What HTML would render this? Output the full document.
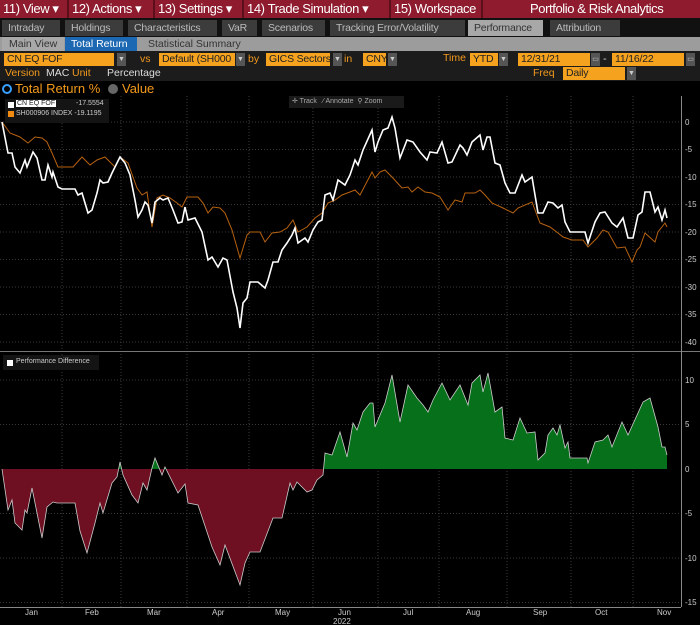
<!DOCTYPE html>
<html><head><meta charset="utf-8"><style>
*{margin:0;padding:0;box-sizing:border-box}
body{width:700px;height:625px;background:#000;font-family:"Liberation Sans",sans-serif;overflow:hidden;position:relative;color:#ddd}
.a{position:absolute;white-space:nowrap}
.hb{background:#8e1b2e;height:18px;top:0;font-size:13px;letter-spacing:-0.4px;color:#fff;line-height:18px;padding-left:3px;overflow:hidden}
.tab{position:absolute;top:20px;height:16px;background:#3c3c3c;color:#bbb;font-size:10.5px;letter-spacing:-0.2px;line-height:16px;padding-left:6px;white-space:nowrap;overflow:hidden}
.of{position:absolute;background:#f5a21f;color:#222;font-size:10.5px;letter-spacing:-0.2px;line-height:13px;height:13px;padding-left:3px;white-space:nowrap;overflow:hidden}
.dd{position:absolute;background:#555;height:13px;width:9px;color:#ccc;font-size:7px;line-height:13px;text-align:center}
.ol{position:absolute;color:#f39a1c;font-size:10.5px;line-height:13px;white-space:nowrap}
</style></head><body>
<div class="a" style="left:0;top:0;width:700px;height:18px;background:#5a0f1a"></div>
<div class="a hb" style="left:0;width:67px">11) View ▾</div>
<div class="a hb" style="left:69px;width:84px">12) Actions ▾</div>
<div class="a hb" style="left:155px;width:87px">13) Settings ▾</div>
<div class="a hb" style="left:244px;width:145px">14) Trade Simulation ▾</div>
<div class="a hb" style="left:391px;width:90px">15) Workspace</div>
<div class="a hb" style="left:483px;width:217px;padding-left:47px">Portfolio &amp; Risk Analytics</div>
<div class="a" style="left:0;top:18px;width:700px;height:19px;background:#111"></div>
<div class="tab" style="left:2px;width:58px">Intraday</div>
<div class="tab" style="left:65px;width:58px">Holdings</div>
<div class="tab" style="left:128px;width:89px">Characteristics</div>
<div class="tab" style="left:222px;width:35px">VaR</div>
<div class="tab" style="left:262px;width:63px">Scenarios</div>
<div class="tab" style="left:330px;width:135px">Tracking Error/Volatility</div>
<div class="tab" style="left:468px;width:75px;background:#a8a8a8;color:#333">Performance</div>
<div class="tab" style="left:550px;width:70px">Attribution</div>
<div class="a" style="left:0;top:37px;width:700px;height:14px;background:#9c9c9c"></div>
<div class="a" style="left:2px;top:37px;width:62px;height:14px;background:#a8a8a8;color:#333;font-size:10.5px;line-height:14px;padding-left:7px">Main View</div>
<div class="a" style="left:65px;top:37px;width:72px;height:14px;background:#1d68b2;color:#fff;font-size:10.5px;line-height:14px;padding-left:6px">Total Return</div>
<div class="a" style="left:148px;top:37px;color:#333;font-size:10.5px;line-height:14px">Statistical Summary</div>
<div class="a" style="left:0;top:51px;width:700px;height:30px;background:#1c1c1c"></div>
<div class="of" style="left:4px;top:53px;width:110px">CN EQ FOF</div><div class="dd" style="left:117px;top:53px">▼</div>
<div class="ol" style="left:140px;top:53px">vs</div>
<div class="of" style="left:159px;top:53px;width:76px">Default (SH000</div><div class="dd" style="left:236px;top:53px">▼</div>
<div class="ol" style="left:248px;top:53px">by</div>
<div class="of" style="left:266px;top:53px;width:64px">GICS Sectors</div><div class="dd" style="left:333px;top:53px">▼</div>
<div class="ol" style="left:344px;top:53px">in</div>
<div class="of" style="left:363px;top:53px;width:23px">CNY</div><div class="dd" style="left:388px;top:53px">▼</div>
<div class="ol" style="left:443px;top:52px">Time</div>
<div class="of" style="left:470px;top:53px;width:28px">YTD</div><div class="dd" style="left:499px;top:53px">▼</div>
<div class="of" style="left:518px;top:53px;width:72px">12/31/21</div><div class="dd" style="left:591px;top:53px">▭</div>
<div class="a" style="left:603px;top:53px;font-size:11px;color:#ccc">-</div>
<div class="of" style="left:612px;top:53px;width:72px">11/16/22</div><div class="dd" style="left:686px;top:53px">▭</div>
<div class="ol" style="left:5px;top:67px">Version</div>
<div class="a" style="left:46px;top:67px;font-size:10.5px;color:#ddd">MAC</div>
<div class="ol" style="left:72px;top:67px">Unit</div>
<div class="a" style="left:107px;top:67px;font-size:10.5px;color:#ddd">Percentage</div>
<div class="ol" style="left:533px;top:67px">Freq</div>
<div class="of" style="left:563px;top:67px;width:62px">Daily</div><div class="dd" style="left:627px;top:67px">▼</div>
<div class="a" style="left:2px;top:84px;width:10px;height:10px;border:2px solid #3aa0ff;border-radius:50%"></div>
<div class="a" style="left:15px;top:81px;font-size:13px;color:#f39a1c">Total Return %</div>
<div class="a" style="left:108px;top:84px;width:10px;height:10px;background:#666;border-radius:50%"></div>
<div class="a" style="left:122px;top:81px;font-size:13px;color:#f39a1c">Value</div>

<svg class="a" style="left:0;top:0" width="700" height="625">
<g stroke="#3a3a3a" stroke-dasharray="1,2" stroke-width="1">
<path d="M62 96V607M121 96V607M187 96V607M249 96V607M313 96V607M378 96V607M439 96V607M507 96V607M571 96V607M633 96V607"/>
<path d="M0 122H681M0 149.5H681M0 177H681M0 204.5H681M0 232H681M0 259.5H681M0 287H681M0 314.5H681M0 342H681"/>
<path d="M0 380H681M0 424.5H681M0 513.5H681M0 558H681M0 602.5H681"/>
</g>
<line x1="0" y1="351.5" x2="700" y2="351.5" stroke="#777" stroke-width="1"/>
<line x1="681.5" y1="96" x2="681.5" y2="607" stroke="#888"/>
<line x1="0" y1="607.5" x2="681" y2="607.5" stroke="#888"/>
<g fill="#ccc" font-size="8" font-family="Liberation Sans">
<text x="685" y="125">0</text><text x="685" y="152">-5</text><text x="685" y="180">-10</text><text x="685" y="207">-15</text><text x="685" y="235">-20</text><text x="685" y="262">-25</text><text x="685" y="290">-30</text><text x="685" y="317">-35</text><text x="685" y="345">-40</text>
<text x="685" y="383">10</text><text x="685" y="427">5</text><text x="685" y="472">0</text><text x="685" y="516">-5</text><text x="685" y="561">-10</text><text x="685" y="605">-15</text>
<text x="25" y="615">Jan</text><text x="85" y="615">Feb</text><text x="147" y="615">Mar</text><text x="212" y="615">Apr</text><text x="275" y="615">May</text><text x="338" y="615">Jun</text><text x="403" y="615">Jul</text><text x="466" y="615">Aug</text><text x="533" y="615">Sep</text><text x="595" y="615">Oct</text><text x="657" y="615">Nov</text><text x="333" y="624">2022</text>
</g>
<defs>
<clipPath id="up"><rect x="0" y="340" width="700" height="129"/></clipPath>
<clipPath id="dn"><rect x="0" y="469" width="700" height="140"/></clipPath>
</defs>
<polygon points="2,469 8,510 12,500 15,523 22,530 25,510 27,513 32,488 42,538 47,507 53,502 57,503 75,503 80,531 87,553 95,523 100,503 103,513 112,483 117,477 120,462 123,475 132,495 138,503 143,483 147,490 152,468 155,458 162,475 165,467 178,493 185,484 188,503 198,505 212,547 220,565 225,545 240,585 245,563 250,552 260,552 273,518 282,518 290,483 293,490 297,482 307,492 312,490 317,480 323,475 325,453 332,455 340,432 347,457 353,423 357,430 363,412 370,403 373,403 375,427 385,403 392,375 400,422 408,385 417,398 423,405 428,412 433,400 442,383 450,400 460,385 468,405 472,383 480,375 483,392 488,373 495,412 502,407 505,438 513,440 520,418 527,433 535,432 538,460 545,453 548,435 553,428 557,435 560,425 565,448 568,442 570,458 587,458 588,463 595,442 603,440 608,435 612,447 622,422 628,435 643,402 650,398 658,427 662,447 665,447 667,455 667,469" fill="#06701b" clip-path="url(#up)"/>
<polygon points="2,469 8,510 12,500 15,523 22,530 25,510 27,513 32,488 42,538 47,507 53,502 57,503 75,503 80,531 87,553 95,523 100,503 103,513 112,483 117,477 120,462 123,475 132,495 138,503 143,483 147,490 152,468 155,458 162,475 165,467 178,493 185,484 188,503 198,505 212,547 220,565 225,545 240,585 245,563 250,552 260,552 273,518 282,518 290,483 293,490 297,482 307,492 312,490 317,480 323,475 325,453 332,455 340,432 347,457 353,423 357,430 363,412 370,403 373,403 375,427 385,403 392,375 400,422 408,385 417,398 423,405 428,412 433,400 442,383 450,400 460,385 468,405 472,383 480,375 483,392 488,373 495,412 502,407 505,438 513,440 520,418 527,433 535,432 538,460 545,453 548,435 553,428 557,435 560,425 565,448 568,442 570,458 587,458 588,463 595,442 603,440 608,435 612,447 622,422 628,435 643,402 650,398 658,427 662,447 665,447 667,455 667,469" fill="#6e0f22" clip-path="url(#dn)"/>
<polyline points="2,469 8,510 12,500 15,523 22,530 25,510 27,513 32,488 42,538 47,507 53,502 57,503 75,503 80,531 87,553 95,523 100,503 103,513 112,483 117,477 120,462 123,475 132,495 138,503 143,483 147,490 152,468 155,458 162,475 165,467 178,493 185,484 188,503 198,505 212,547 220,565 225,545 240,585 245,563 250,552 260,552 273,518 282,518 290,483 293,490 297,482 307,492 312,490 317,480 323,475 325,453 332,455 340,432 347,457 353,423 357,430 363,412 370,403 373,403 375,427 385,403 392,375 400,422 408,385 417,398 423,405 428,412 433,400 442,383 450,400 460,385 468,405 472,383 480,375 483,392 488,373 495,412 502,407 505,438 513,440 520,418 527,433 535,432 538,460 545,453 548,435 553,428 557,435 560,425 565,448 568,442 570,458 587,458 588,463 595,442 603,440 608,435 612,447 622,422 628,435 643,402 650,398 658,427 662,447 665,447 667,455" fill="none" stroke="#ccc" stroke-width="0.8"/>
<polyline points="2,122 10,133 15,135 20,137 28,143 35,137 42,138 47,142 52,153 58,167 73,167 82,157 90,165 97,160 105,157 110,162 115,167 120,157 128,163 137,188 142,195 147,192 152,227 157,198 163,195 170,198 177,203 182,207 187,197 198,197 203,203 208,213 213,207 220,208 225,213 232,230 240,258 247,235 250,232 260,232 265,242 272,233 280,232 287,228 293,220 298,232 307,227 315,218 322,213 328,203 335,200 342,195 350,192 355,190 360,195 372,172 375,178 380,172 385,170 392,177 402,188 408,187 412,192 418,187 425,192 432,193 440,197 448,210 455,200 462,202 465,193 475,193 480,190 485,195 492,203 503,208 513,213 518,208 532,202 540,223 550,227 558,233 563,237 572,240 583,240 588,247 597,238 603,230 608,232 617,248 625,247 632,262 637,250 640,247 645,233 655,242 658,232 665,223 667,227" fill="none" stroke="#b8620f" stroke-width="1"/>
<polyline points="2,122 8,153 12,153 15,167 20,173 25,160 27,167 33,152 37,158 42,180 45,180 48,165 52,177 53,172 58,187 62,189 75,189 78,195 82,193 88,213 92,210 97,193 100,180 103,183 108,182 112,173 115,167 120,157 125,163 130,175 135,200 138,217 142,210 145,202 148,205 152,223 155,202 160,198 163,200 168,198 173,210 178,223 182,222 185,207 188,220 195,218 202,232 208,260 212,257 218,267 223,258 227,260 233,292 237,308 240,328 243,303 247,298 250,282 258,282 265,288 268,280 273,262 278,262 282,250 287,243 292,235 295,228 298,243 305,238 308,242 313,230 318,222 322,220 325,195 330,193 333,200 338,180 345,185 350,175 355,160 358,165 363,150 372,130 375,152 378,142 383,130 388,128 392,117 395,128 400,158 407,140 413,142 420,152 427,160 430,152 437,153 442,142 448,163 452,162 460,145 463,148 467,155 472,142 480,135 483,150 487,137 490,137 495,163 500,165 505,183 510,193 515,193 522,175 525,182 532,177 538,213 543,213 548,202 553,203 558,208 562,205 565,222 570,232 585,232 588,243 595,222 600,213 605,212 612,223 617,227 623,218 628,238 633,238 638,215 642,212 645,192 650,192 655,212 658,207 662,220 665,210 667,218" fill="none" stroke="#fff" stroke-width="1.6"/>
</svg>
<div class="a" style="left:5px;top:99px;width:104px;height:24px;background:#141414"></div>
<div class="a" style="left:8px;top:102px;width:6px;height:6px;background:#fff"></div>
<div class="a" style="left:16px;top:100px;font-size:7px;background:#fff;color:#222;padding:0 1px">CN EQ FOF</div>
<div class="a" style="left:76px;top:100px;font-size:7px;color:#ccc">-17.5554</div>
<div class="a" style="left:8px;top:111px;width:6px;height:6px;background:#f08a10"></div>
<div class="a" style="left:16px;top:110px;font-size:7px;color:#ccc">SH000906  INDEX -19.1195</div>
<div class="a" style="left:289px;top:96px;width:115px;height:12px;background:#1a1a1a;font-size:7px;color:#aaa;line-height:12px;padding-left:3px">✛ Track &nbsp; ⁄ Annotate &nbsp;⚲ Zoom</div>
<div class="a" style="left:3px;top:355px;width:96px;height:15px;background:#141414"></div>
<div class="a" style="left:7px;top:360px;width:6px;height:6px;background:#fff"></div>
<div class="a" style="left:16px;top:358px;font-size:7px;color:#ccc">Performance Difference</div>
</body></html>
